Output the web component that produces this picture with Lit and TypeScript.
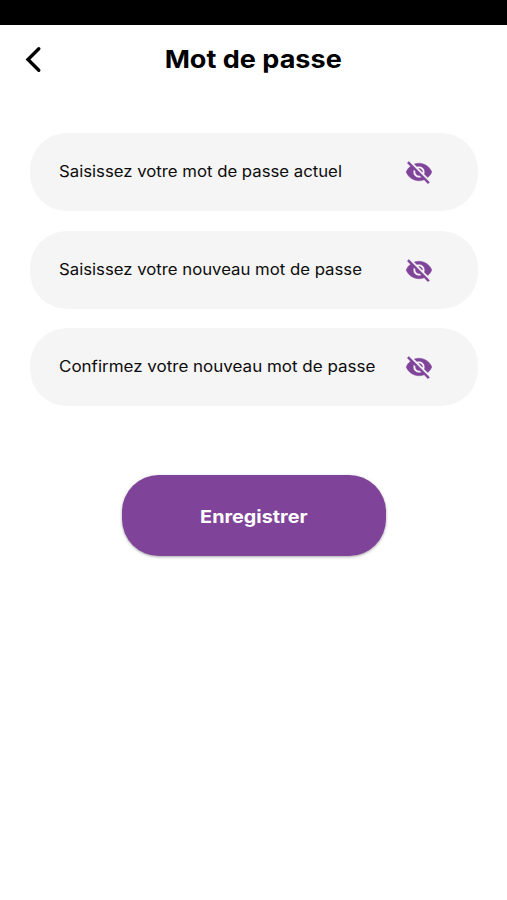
import { LitElement, html, css } from "lit";
import { customElement, property } from "lit/decorators.js";
import { styleMap } from "lit/directives/style-map.js";

@customElement("password-field")
class PasswordField extends LitElement {
  @property() label = "";
  @property({ type: Number }) stretch = 1.09;

  static styles = css`
    :host {
      display: flex;
      align-items: center;
      justify-content: space-between;
      box-sizing: border-box;
      height: 78px;
      padding: 0 45px 0 29px;
      border-radius: 37px;
      background: #f5f5f5;
    }
    .label {
      font-size: 15.3px;
      line-height: 20px;
      font-weight: 400;
      color: #0c0c0c;
      white-space: nowrap;
      transform-origin: left;
    }
    .eye {
      flex: none;
      width: 28px;
      height: 28px;
      fill: #7f4399;
      stroke: #7f4399;
      stroke-width: 0.4;
    }
  `;

  render() {
    return html`
      <span class="label" style=${styleMap({ transform: `scaleX(${this.stretch})` })}>${this.label}</span>
      <svg class="eye" viewBox="0 0 24 24">
        <path d="M12 7c2.76 0 5 2.24 5 5 0 .65-.13 1.26-.36 1.83l2.92 2.92c1.51-1.26 2.7-2.89 3.43-4.75-1.73-4.39-6-7.5-11-7.5-1.4 0-2.74.25-3.98.7l2.16 2.16C10.74 7.13 11.35 7 12 7zM2 4.27l2.28 2.28.46.46C3.08 8.3 1.78 10.02 1 12c1.73 4.39 6 7.5 11 7.5 1.55 0 3.03-.3 4.38-.84l.42.42L19.73 22 21 20.73 3.27 3 2 4.27zM7.53 9.8l1.55 1.55c-.05.21-.08.43-.08.65 0 1.66 1.34 3 3 3 .22 0 .44-.03.65-.08l1.55 1.55c-.67.33-1.41.53-2.2.53-2.76 0-5-2.24-5-5 0-.79.2-1.53.53-2.2zm4.31-.78l3.15 3.15.02-.16c0-1.66-1.34-3-3-3l-.17.01z" />
      </svg>
    `;
  }
}

@customElement("app-root")
class AppRoot extends LitElement {
  static styles = css`
    :host {
      display: flex;
      flex-direction: column;
      height: 900px;
      background: #fff;
      color: #000;
      font-family: Inter, "Liberation Sans", sans-serif;
    }
    .status {
      height: 25px;
      background: #000;
    }
    .header {
      display: grid;
      grid-template-columns: 66px 1fr 66px;
      align-items: center;
      height: 69px;
    }
    .back {
      width: 20px;
      height: 30px;
      margin-left: 23px;
      fill: none;
      stroke: #000;
      stroke-width: 3.4;
      stroke-linecap: round;
      stroke-linejoin: miter;
    }
    .title {
      margin: 0 0 2px;
      justify-self: center;
      font-size: 24.5px;
      line-height: 32px;
      font-weight: 680;
      white-space: nowrap;
      transform: scaleX(1.104);
    }
    .fields {
      display: grid;
      gap: 19.7px;
      margin: 39px 29px 0 30px;
    }
    .save {
      align-self: center;
      width: 264px;
      height: 80.5px;
      margin-top: 69px;
      padding: 2px 0 0;
      border: 0;
      border-radius: 37px;
      background: #7f4399;
      box-shadow: 0 1px 3px rgba(0, 0, 0, 0.35);
      color: #fff;
      font: 700 18px/24px Inter, "Liberation Sans", sans-serif;
    }
    .caption {
      display: inline-block;
      transform: scaleX(1.1);
    }
  `;

  render() {
    return html`
      <div class="status"></div>
      <header class="header">
        <svg class="back" viewBox="0 0 20 30"><path d="M15.8 3.8 5 14.5 15.8 25.2" /></svg>
        <h1 class="title">Mot de passe</h1>
      </header>
      <div class="fields">
        <password-field label="Saisissez votre mot de passe actuel" stretch="1.094"></password-field>
        <password-field label="Saisissez votre nouveau mot de passe" stretch="1.094"></password-field>
        <password-field label="Confirmez votre nouveau mot de passe" stretch="1.11"></password-field>
      </div>
      <button class="save"><span class="caption">Enregistrer</span></button>
    `;
  }
}
